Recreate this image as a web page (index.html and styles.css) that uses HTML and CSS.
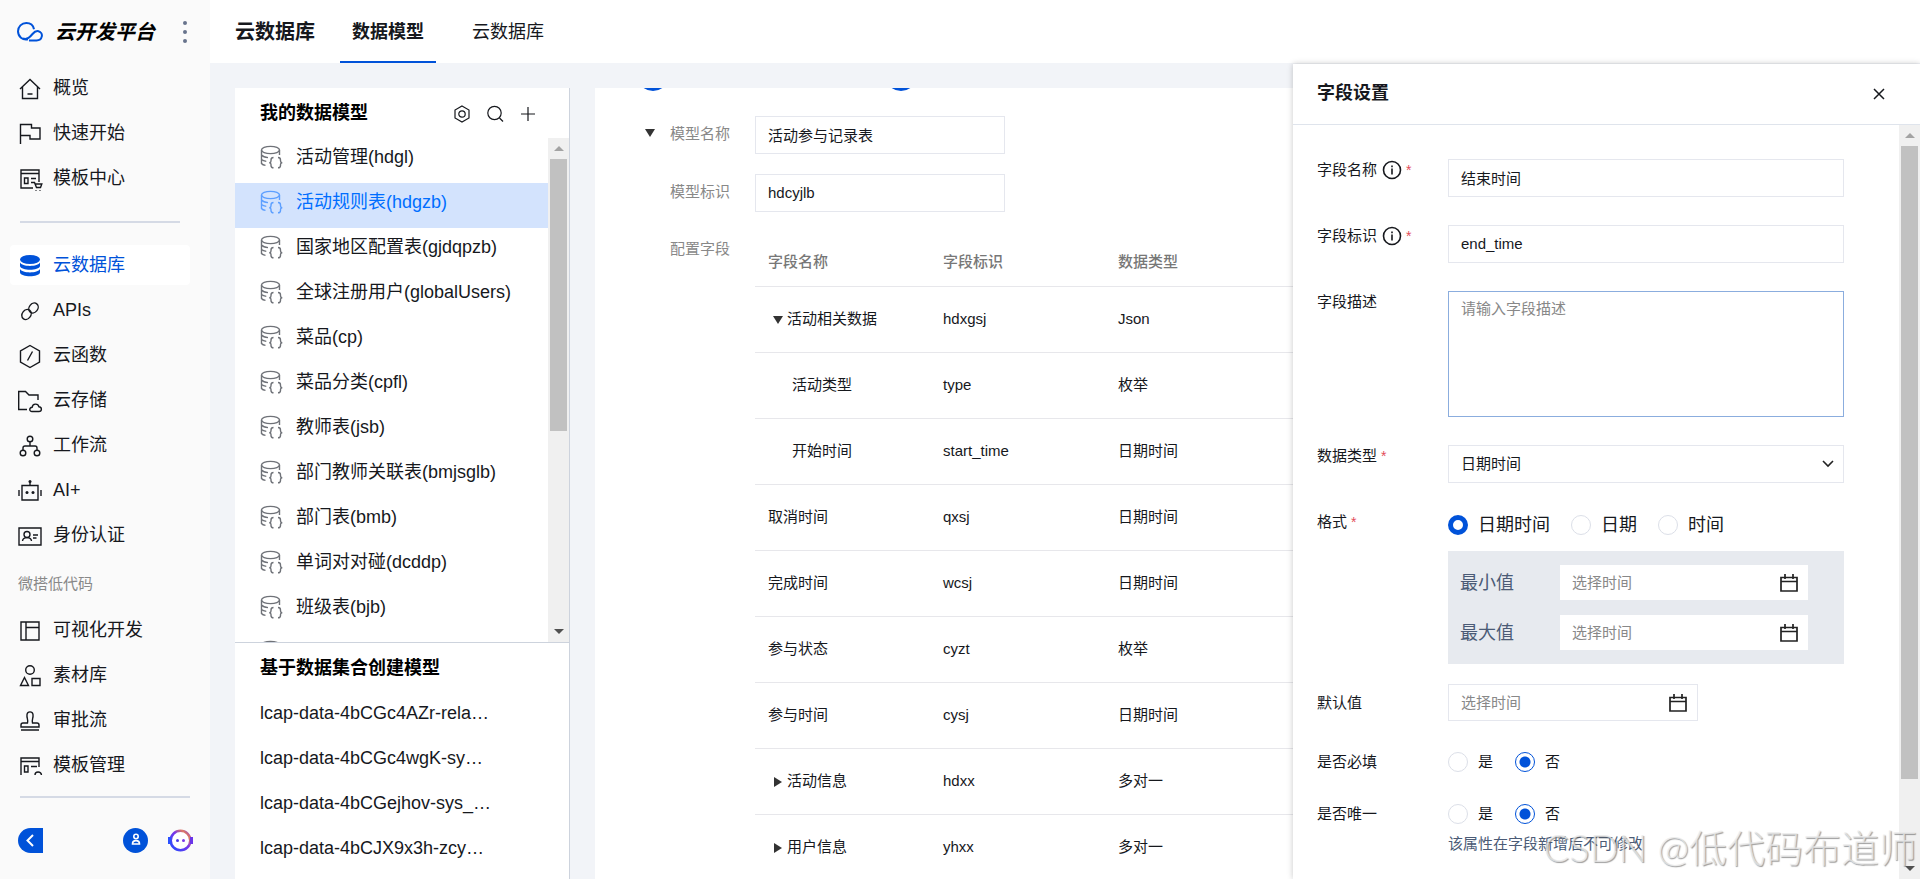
FILE: index.html
```html
<!DOCTYPE html>
<html lang="zh-CN">
<head>
<meta charset="utf-8">
<title>云开发平台</title>
<link rel="stylesheet" href="styles.css">
</head>
<body>
<svg class="defs" aria-hidden="true">
  <symbol id="db-json" viewBox="0 0 24 24"><ellipse cx="10.5" cy="5" rx="9" ry="3.6"/><path d="M1.500 5v13.500c.8 1 2 1.600 4 1.900M19.500 5v5M1.500 10c1.300 1.500 3.500 2.300 6.500 2.600M1.500 14.500c1.200 1 2.800 1.600 4.800 1.900M13.500 12.500c-2 0-2.500 1-2.500 2.500v1c0 1-.7 1.700-1.800 1.700 1.100 0 1.800.7 1.800 1.700v1c0 1.500.5 2.400 2.500 2.400M18 12.500c2 0 2.500 1 2.500 2.500v1c0 1 .7 1.700 1.800 1.700-1.100 0-1.800.7-1.800 1.700v1c0 1.500-.5 2.400-2.500 2.400"/></symbol>
  <symbol id="calendar" viewBox="0 0 20 20"><path d="M2 4.500h16V18H2zM2 8.500h16M6 1v5M14 1v5"/></symbol>
  <symbol id="info" viewBox="0 0 20 20"><circle cx="10" cy="10" r="8.500"/><path d="M10 8.500v6M10 5.500v1.800"/></symbol>
</svg>
<div class="app">
  <aside class="sidebar">
    <div class="brand">
      <svg class="brand-logo" viewBox="0 0 26 20"><path d="M11 17.300C5.500 18.500 1 14.500 1 9.300 1 4.500 4.700 1 9.300 1c4 0 7 2.600 7.700 6.200M6 16.500c4.500 1.500 7-1.500 9.500-4.500 2-2.400 4-3.300 6-2.800 2.500.6 3.800 3 3.300 5.200-.5 2.500-2.500 4.100-5.300 4.100H12"/></svg>
      <span class="brand-name">云开发平台</span>
      <button class="dots" aria-label="更多"><i></i><i></i><i></i></button>
    </div>
    <nav class="nav">
      <a href="#"><svg viewBox="0 0 24 24"><path d="M2 12 12 2.500 22 12M4.500 10v11.500h15V10M9.500 17h5"/></svg>概览</a>
      <a href="#"><svg viewBox="0 0 24 24"><path d="M2.500 22V2.500h11V6H22v11H12v-3.500H2.500"/></svg>快速开始</a>
      <a href="#"><svg viewBox="0 0 24 24"><path d="M15 21H3V3h18v12M3 6.500h18M6.500 11h3.500v5.500H6.500zM13 11.500h5M13 15.500h3.500l2 5h4l1.300-3.500H17M18 23v.8M22 23v.8"/></svg>模板中心</a>
      <hr class="rule rule-short">
      <a href="#" class="active"><svg class="solid" viewBox="0 0 24 24"><ellipse cx="12" cy="5.500" rx="10" ry="4.500"/><path d="M2 8.500c2 4.500 18 4.500 20 0v3.500c-1 5-19 5-20 0zM2 15c2 4.500 18 4.500 20 0v3.500c-1 5-19 5-20 0z"/></svg>云数据库</a>
      <a href="#"><svg viewBox="0 0 24 24"><ellipse cx="8.500" cy="15.500" rx="4.300" ry="5.300" transform="rotate(38 8.500 15.500)"/><ellipse cx="15.500" cy="9" rx="4.300" ry="5.300" transform="rotate(38 15.500 9)"/></svg>APIs</a>
      <a href="#"><svg viewBox="0 0 24 24"><path d="M12 1.500 21.500 7v11L12 23.500 2.500 18V7zM14.500 7.500l-5 9"/></svg>云函数</a>
      <a href="#"><svg viewBox="0 0 24 24"><path d="M9 20.500H.7V2.500h6.800L11 6h9v5M14 22.500c-3 0-3-4 .2-4.300.3-4 6-4 6.600-.5 3.500.2 3.400 4.800 0 4.800z"/></svg>云存储</a>
      <a href="#"><svg viewBox="0 0 24 24"><circle cx="12" cy="5" r="2.800"/><circle cx="5" cy="19" r="2.800"/><circle cx="19" cy="19" r="2.800"/><path d="M12 8v4M5 16v-2q0-2 2-2h10q2 0 2 2v2"/></svg>工作流</a>
      <a href="#"><svg viewBox="0 0 24 24"><path d="M4 6.500h16V21H4zM12 6.500V2M1 11v6M23 11v6"/><circle class="fill" cx="12" cy="2.500" r="1.500"/><circle class="fill" cx="9" cy="13.500" r="1.500"/><circle class="fill" cx="15" cy="13.500" r="1.500"/></svg>AI+</a>
      <a href="#"><svg viewBox="0 0 24 24"><path d="M1 4h22v17H1zM4.500 17c.5-4.500 8.500-4.500 9 0M15 11h5M15 14h3.500"/><circle cx="9" cy="10.500" r="3"/></svg>身份认证</a>
      <h2 class="nav-label">微搭低代码</h2>
      <a href="#"><svg viewBox="0 0 24 24"><path d="M3 3h18v18H3zM8 3v18M8 8.500h13"/></svg>可视化开发</a>
      <a href="#"><svg viewBox="0 0 24 24"><circle cx="12" cy="6" r="4.300"/><path d="m6.500 13.500 4 8h-8zM14 14.500h8v7h-8z"/></svg>素材库</a>
      <a href="#"><svg viewBox="0 0 24 24"><path d="M9.500 14c1-3-1-5-.5-8.500.6-3.500 5.400-3.500 6 0 .5 3.500-1.500 5.500-.5 8.500h4.500q2 0 2 2v2H3v-2q0-2 2-2zM3 21h18"/></svg>审批流</a>
      <a href="#"><svg viewBox="0 0 24 24"><path d="M3 21V4h18v9M3 7.500h18M6.500 12h3.500v6H6.500zM13 12.500h6M17 21c0-4 6-4 6.500 0"/></svg>模板管理</a>
      <hr class="rule">
    </nav>
    <div class="side-foot">
      <button class="collapse" aria-label="收起"><svg viewBox="0 0 25 25"><path d="m15 7-5.500 5.500L15 18"/></svg></button>
      <button class="user" aria-label="账号"><svg viewBox="0 0 25 25"><circle cx="13" cy="8.500" r="2.200"/><path d="M9.500 16c0-4.500 7-4.500 7 0z"/></svg></button>
      <button class="bot" aria-label="助手"><svg viewBox="0 0 25 25"><defs><linearGradient id="ring" x1="0" y1="1" x2="1" y2="0"><stop offset="0" stop-color="#1f4bff"/><stop offset=".55" stop-color="#7a35e8"/><stop offset=".8" stop-color="#e07a60"/><stop offset="1" stop-color="#7a35e8"/></linearGradient></defs><circle cx="12.500" cy="12.500" r="9.800" fill="#fff" stroke="url(#ring)" stroke-width="2.600"/><path d="M1.500 9v7" stroke="#2a50ff" stroke-width="3"/><path d="M23.500 9v7" stroke="#6a35e8" stroke-width="3"/><circle cx="9.500" cy="12.500" r="1.500" fill="#4a3ae8" stroke="none"/><circle cx="15.500" cy="12.500" r="1.500" fill="#7a35e8" stroke="none"/></svg></button>
    </div>
  </aside>

  <div class="page">
    <header class="topbar">
      <h1>云数据库</h1>
      <a href="#" class="tab current">数据模型</a>
      <a href="#" class="tab">云数据库</a>
    </header>
    <div class="workspace">
      <section class="models">
        <div class="models-head">
          <h2>我的数据模型</h2>
          <div class="tools">
            <button aria-label="设置"><svg viewBox="0 0 18 18"><path d="M9 1l7 4v8l-7 4-7-4V5z"/><circle cx="9" cy="9" r="3.200"/></svg></button>
            <button aria-label="搜索"><svg viewBox="0 0 18 18"><circle cx="8.500" cy="8" r="6.700"/><path d="m13.500 13 3.500 3.500"/></svg></button>
            <button aria-label="新建"><svg viewBox="0 0 18 18"><path d="M9 2v14M2 9h14"/></svg></button>
          </div>
        </div>
        <div class="list-wrap">
          <ul class="list">
            <li><svg><use href="#db-json"/></svg>活动管理(hdgl)</li>
            <li class="selected"><svg><use href="#db-json"/></svg>活动规则表(hdgzb)</li>
            <li><svg><use href="#db-json"/></svg>国家地区配置表(gjdqpzb)</li>
            <li><svg><use href="#db-json"/></svg>全球注册用户(globalUsers)</li>
            <li><svg><use href="#db-json"/></svg>菜品(cp)</li>
            <li><svg><use href="#db-json"/></svg>菜品分类(cpfl)</li>
            <li><svg><use href="#db-json"/></svg>教师表(jsb)</li>
            <li><svg><use href="#db-json"/></svg>部门教师关联表(bmjsglb)</li>
            <li><svg><use href="#db-json"/></svg>部门表(bmb)</li>
            <li><svg><use href="#db-json"/></svg>单词对对碰(dcddp)</li>
            <li><svg><use href="#db-json"/></svg>班级表(bjb)</li>
            <li><svg><use href="#db-json"/></svg></li>
          </ul>
          <div class="scroll"><i class="up"></i><b class="thumb thumb-list"></b><i class="down"></i></div>
        </div>
        <div class="sets">
          <h2>基于数据集合创建模型</h2>
          <ul>
            <li>lcap-data-4bCGc4AZr-rela…</li>
            <li>lcap-data-4bCGc4wgK-sy…</li>
            <li>lcap-data-4bCGejhov-sys_…</li>
            <li>lcap-data-4bCJX9x3h-zcy…</li>
          </ul>
        </div>
      </section>

      <main class="detail">
        <div class="steps"><i></i><i></i></div>
        <div class="row">
          <span class="caret-slot"><i class="caret"></i></span>
          <label for="model-name">模型名称</label>
          <input id="model-name" class="box" value="活动参与记录表">
        </div>
        <div class="row">
          <span class="caret-slot"></span>
          <label for="model-id">模型标识</label>
          <input id="model-id" class="box" value="hdcyjlb">
        </div>
        <div class="row row-table">
          <span class="caret-slot"></span>
          <span class="label">配置字段</span>
          <table>
            <thead><tr><th>字段名称</th><th>字段标识</th><th>数据类型</th><th></th></tr></thead>
            <tbody>
              <tr><td class="group"><i class="caret"></i>活动相关数据</td><td>hdxgsj</td><td>Json</td><td></td></tr>
              <tr><td class="child">活动类型</td><td>type</td><td>枚举</td><td></td></tr>
              <tr><td class="child">开始时间</td><td>start_time</td><td>日期时间</td><td></td></tr>
              <tr><td>取消时间</td><td>qxsj</td><td>日期时间</td><td></td></tr>
              <tr><td>完成时间</td><td>wcsj</td><td>日期时间</td><td></td></tr>
              <tr><td>参与状态</td><td>cyzt</td><td>枚举</td><td></td></tr>
              <tr><td>参与时间</td><td>cysj</td><td>日期时间</td><td></td></tr>
              <tr><td class="group"><i class="caret closed"></i>活动信息</td><td>hdxx</td><td>多对一</td><td></td></tr>
              <tr><td class="group"><i class="caret closed"></i>用户信息</td><td>yhxx</td><td>多对一</td><td></td></tr>
            </tbody>
          </table>
        </div>
      </main>
    </div>

    <section class="drawer" aria-label="字段设置">
      <div class="drawer-head">
        <h2>字段设置</h2>
        <button aria-label="关闭"><svg viewBox="0 0 12 12"><path d="m1 1 10 10M11 1 1 11"/></svg></button>
      </div>
      <div class="drawer-body">
        <form class="form">
          <div class="field">
            <label for="f-name">字段名称<svg class="info"><use href="#info"/></svg><em>*</em></label>
            <input id="f-name" class="box" value="结束时间">
          </div>
          <div class="field">
            <label for="f-id">字段标识<svg class="info"><use href="#info"/></svg><em>*</em></label>
            <input id="f-id" class="box" value="end_time">
          </div>
          <div class="field">
            <label for="f-desc">字段描述</label>
            <textarea id="f-desc" class="box" placeholder="请输入字段描述"></textarea>
          </div>
          <div class="field">
            <label for="f-type">数据类型<em>*</em></label>
            <select id="f-type" class="box"><option>日期时间</option></select>
          </div>
          <div class="field field-format">
            <span class="label">格式<em>*</em></span>
            <div>
              <div class="radios radios-large">
                <label><input type="radio" name="fmt" class="ring" checked>日期时间</label>
                <label><input type="radio" name="fmt">日期</label>
                <label><input type="radio" name="fmt">时间</label>
              </div>
              <div class="range">
                <label for="min">最小值</label>
                <div class="date"><input id="min" placeholder="选择时间"><svg><use href="#calendar"/></svg></div>
                <label for="max">最大值</label>
                <div class="date"><input id="max" placeholder="选择时间"><svg><use href="#calendar"/></svg></div>
              </div>
            </div>
          </div>
          <div class="field field-default">
            <label for="def">默认值</label>
            <div class="date date-outlined"><input id="def" placeholder="选择时间"><svg><use href="#calendar"/></svg></div>
          </div>
          <div class="field field-choice">
            <span class="label">是否必填</span>
            <div class="radios">
              <label><input type="radio" name="req">是</label>
              <label><input type="radio" name="req" checked>否</label>
            </div>
          </div>
          <div class="field field-choice">
            <span class="label">是否唯一</span>
            <div>
              <div class="radios">
                <label><input type="radio" name="uniq">是</label>
                <label><input type="radio" name="uniq" checked>否</label>
              </div>
              <p class="hint">该属性在字段新增后不可修改</p>
            </div>
          </div>
        </form>
        <div class="scroll"><i class="up"></i><b class="thumb thumb-drawer"></b><i class="down"></i></div>
      </div>
    </section>
  </div>
  <div class="watermark">CSDN @低代码布道师</div>
</div>
</body>
</html>
```
FILE: styles.css
```css
* { box-sizing: border-box; }
body, h1, h2, ul, p { margin: 0; padding: 0; }
body {
  font-family: "Liberation Sans", "Noto Sans CJK SC", sans-serif;
  font-size: 15px;
  line-height: 20px;
  color: #16181d;
}
ul { list-style: none; }
a { color: inherit; text-decoration: none; }
button { border: 0; padding: 0; background: none; color: inherit; cursor: pointer; display: flex; align-items: center; justify-content: center; }
input, select, textarea { font: inherit; color: inherit; margin: 0; outline: 0; }
svg { fill: none; stroke: currentColor; stroke-width: 1.4; flex: none; }
.defs { position: absolute; width: 0; height: 0; }

.app { position: relative; display: flex; height: 100vh; overflow: hidden; background: #f2f4f8; }

/* Sidebar */
.sidebar { flex: none; width: 210px; background: #fafafa; display: flex; flex-direction: column; }
.brand { display: flex; align-items: center; height: 63px; padding: 0 20px 0 17px; }
.brand-logo { width: 26px; height: 20px; color: #0052d9; stroke-width: 2; }
.brand-name { margin-left: 12px; font-size: 20px; line-height: 24px; font-weight: bold; font-style: italic; color: #000; }
.dots { flex-direction: column; gap: 5px; margin-left: auto; width: 10px; }
.dots i { width: 4px; height: 4px; border-radius: 50%; background: #67738c; }
.nav { padding: 5px 20px 0 10px; display: flex; flex-direction: column; gap: 5px; }
.nav a { display: flex; align-items: center; gap: 11px; height: 40px; padding-left: 8px; border-radius: 4px; font-size: 18px; }
.nav a svg { width: 24px; height: 24px; margin-top: 2px; overflow: visible; }
.nav .active { background: #fff; color: #0052d9; }
.nav .solid { fill: currentColor; stroke: none; }
.fill { fill: currentColor; stroke: none; }
.rule { flex: none; width: auto; height: 2px; margin: 6px 0 0 10px; border: 0; background: #d5dae5; }
.rule-short { margin: 18px 10px 17px; }
.nav-label { height: 45px; padding: 14px 0 0 8px; font-size: 15px; font-weight: normal; color: #888; }
.side-foot { display: flex; align-items: center; padding: 30px 17px 0 18px; }
.side-foot svg { width: 25px; height: 25px; stroke-width: 2; }
.collapse { background: #0052d9; color: #fff; border-radius: 13px 0 0 13px; }
.user { margin-left: auto; background: #0052d9; color: #fff; border-radius: 50%; }
.user svg { stroke-width: 1.6; }
.bot { margin-left: 20px; }

/* Page */
.page { position: relative; flex: 1; min-width: 0; display: flex; flex-direction: column; }
.topbar { display: flex; flex: none; height: 63px; padding-left: 25px; background: #fff; }
.topbar h1 { font-size: 20px; line-height: 64px; margin-right: 25px; }
.tab { padding: 0 12px; margin-right: 24px; font-size: 18px; line-height: 64px; height: 63px; }
.tab.current { font-weight: bold; border-bottom: 2px solid #0052d9; }
.workspace { flex: 1; min-height: 0; display: flex; gap: 25px; padding: 25px 0 0 25px; }

.models { flex: none; width: 335px; display: flex; flex-direction: column; background: #fff; border-right: 1px solid #cdd3dd; }
.models h2 { font-size: 18px; line-height: 24px; color: #000; }
.models-head { display: flex; align-items: center; justify-content: space-between; height: 50px; padding: 0 32px 0 25px; }
.tools { display: flex; gap: 15px; padding-top: 1px; }
.tools svg { width: 18px; height: 18px; stroke-width: 1.2; }
.list-wrap { display: flex; height: 505px; border-bottom: 1px solid #cdd3dd; overflow: hidden; }
.list { flex: 1; min-width: 0; }
.list li { display: flex; align-items: center; height: 45px; padding: 0 0 7px 25px; gap: 12px; font-size: 18px; white-space: nowrap; }
.list svg { width: 24px; height: 24px; stroke: #6f7278; }
.list .selected { background: #d3e3fd; color: #006eff; }
.list .selected svg { stroke: #5c9fff; }
.sets { padding: 13px 25px 0; }
.sets ul { padding-top: 11px; }
.sets li { height: 45px; line-height: 45px; font-size: 18px; white-space: nowrap; }

.scroll { flex: none; width: 21px; background: #f0f0f0; display: flex; flex-direction: column; align-items: center; }
.scroll .up, .scroll .down { flex: none; height: 21px; display: flex; align-items: center; }
.scroll .up::before, .scroll .down::before { content: ""; border: 5px solid transparent; }
.scroll .up::before { border-top: 0; border-bottom-color: #a3a3a3; }
.scroll .down { margin-top: auto; }
.scroll .down::before { border-bottom: 0; border-top-color: #505050; }
.thumb { width: 17px; background: #c1c1c1; }
.thumb-list { height: 54%; }
.thumb-drawer { height: 84%; }

.detail { flex: 1; min-width: 0; background: #fff; padding: 0 40px 0 50px; overflow: hidden; }
.steps { display: flex; gap: 216px; margin: -29px 0 25px -8px; }
.steps i { width: 32px; height: 32px; border-radius: 50%; background: #0052d9; }
.row { display: flex; align-items: flex-start; margin-bottom: 20px; color: #888; }
.row label, .row .label { flex: none; width: 85px; padding-top: 8px; }
.row-table .label { padding-top: 7px; }
.caret-slot { width: 25px; padding-top: 6px; }
.caret { display: inline-block; border: 5px solid transparent; border-top: 8px solid #333; border-bottom: 0; }
.caret.closed { border: 5px solid transparent; border-left: 8px solid #333; border-right: 0; }
.box { border: 1px solid #e5e7ee; background: #fff; height: 38px; padding: 0 12px 2px; border-radius: 0; color: #16181d; }
.row .box { width: 250px; }
table { flex: 1; table-layout: fixed; border-collapse: collapse; color: #16181d; }
th, td { text-align: left; padding: 0 13px; border-bottom: 1px solid #e7e7eb; width: 175px; white-space: nowrap; font-weight: normal; }
th:last-child, td:last-child { width: auto; }
th { height: 54px; padding-top: 6px; color: #777; font-weight: 500; }
td { height: 66px; }
td.group { padding-left: 18px; }
td.child { padding-left: 37px; }
.group .caret { margin-right: 4px; }
.group .closed { margin: 0 5px -1px 1px; }

/* Drawer over the workspace */
.drawer { position: absolute; top: 64px; right: 0; bottom: 0; width: 627px; background: #fff; box-shadow: 0 0 6px rgba(0, 0, 0, .22); display: flex; flex-direction: column; }
.drawer-head { display: flex; align-items: center; justify-content: space-between; height: 61px; flex: none; padding: 0 35px 2px 24px; border-bottom: 1px solid #dfe4ec; }
.drawer-head h2 { font-size: 18px; }
.drawer-head svg { width: 12px; height: 12px; stroke-width: 1.5; margin-top: 1px; }
.drawer-body { flex: 1; min-height: 0; display: flex; }
.form { flex: 1; min-width: 0; padding: 34px 55px 0 24px; }
.field { display: grid; grid-template-columns: 131px 1fr; align-items: start; margin-bottom: 28px; }
.field > label, .field > .label { display: flex; align-items: center; height: 22px; }
.field em { font-style: normal; color: #e34d59; margin-left: 4px; font-size: 14px; line-height: 14px; }
.info { width: 20px; height: 20px; margin-left: 5px; stroke-width: 1.6; }
textarea.box { height: 126px; padding: 7px 12px; resize: none; border-color: #8badde; display: block; }
::placeholder { color: #888; opacity: 1; }
select.box { appearance: none; padding-bottom: 0; background: #fff url("data:image/svg+xml,%3Csvg xmlns='http://www.w3.org/2000/svg' width='12' height='8'%3E%3Cpath d='M1 1l5 5 5-5' fill='none' stroke='%23222' stroke-width='1.600'/%3E%3C/svg%3E") no-repeat right 9px center; }
.field-format { margin-bottom: 20px; }
.radios { display: flex; gap: 22px; }
.radios label { display: flex; align-items: center; gap: 10px; height: 22px; }
.radios-large { padding-top: 3px; gap: 21px; font-size: 18px; }
input[type="radio"] { appearance: none; width: 20px; height: 20px; border: 1px solid #dcdfe8; border-radius: 50%; background: #fff; }
input[type="radio"]:checked { border-color: #0052d9; background: radial-gradient(circle, #0052d9 5px, #fff 6px); }
input.ring[type="radio"]:checked { border: 5px solid #0052d9; background: #fff; }
.range { display: grid; grid-template-columns: 100px 248px; row-gap: 15px; align-items: center; margin-top: 15px; padding: 14px 12px; background: #e7eaef; font-size: 18px; color: #4b5b76; }
.date { display: flex; align-items: center; width: 248px; height: 35px; padding: 0 9px 0 12px; background: #fff; color: #222; }
.date input { flex: 1; min-width: 0; border: 0; padding: 0; background: none; font-size: 15px; }
.date svg { width: 20px; height: 20px; stroke-width: 1.7; }
.date-outlined { width: 250px; height: 37px; border: 1px solid #e5e7ee; }
.field-default { margin-bottom: 30px; align-items: center; }
.field-choice { margin-bottom: 30px; }
.hint { padding-top: 9px; color: #4b5b76; }

.watermark { position: absolute; right: 3px; bottom: 10px; font-family: Lato, "Noto Sans CJK SC", sans-serif; font-weight: 300; font-size: 38px; line-height: 44px; color: rgba(235, 235, 235, .75); text-shadow: 1px 1px 1px rgba(90, 90, 90, .6); pointer-events: none; white-space: nowrap; }
```
